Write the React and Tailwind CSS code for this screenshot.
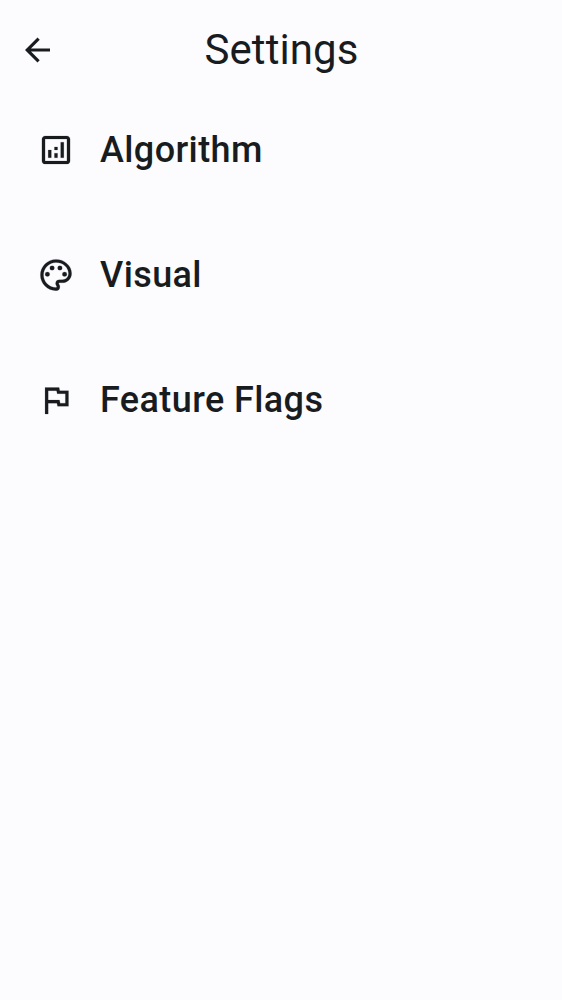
const items = [
  {
    label: "Algorithm",
    path: "M9 17H7v-5h2v5zm8 0h-2V7h2v10zm-4 0h-2v-3h2v3zm0-5h-2v-2h2v2zm6-9H5c-1.100 0-2 .9-2 2v14c0 1.100.9 2 2 2h14c1.100 0 2-.9 2-2V5c0-1.100-.9-2-2-2zm0 16H5V5h14v14z",
  },
  {
    label: "Visual",
    path: "M12 22C6.490 22 2 17.510 2 12S6.490 2 12 2s10 4.040 10 9c0 3.310-2.690 6-6 6h-1.770c-.28 0-.5.220-.5.500 0 .12.050.230.130.330.410.470.640 1.060.640 1.670A2.500 2.500 0 0 1 12 22zm0-18c-4.410 0-8 3.590-8 8s3.590 8 8 8c.28 0 .5-.22.5-.5a.54.54 0 0 0-.14-.35c-.41-.46-.63-1.050-.63-1.650a2.500 2.500 0 0 1 2.500-2.500H16c2.210 0 4-1.790 4-4 0-3.860-3.590-7-8-7zM6.500 10a1.500 1.500 0 1 0 0 3 1.500 1.500 0 0 0 0-3zm3-4a1.500 1.500 0 1 0 0 3 1.500 1.500 0 0 0 0-3zm5 0a1.500 1.500 0 1 0 0 3 1.500 1.500 0 0 0 0-3zm3 4a1.500 1.500 0 1 0 0 3 1.500 1.500 0 0 0 0-3z",
  },
  {
    label: "Feature Flags",
    path: "M12.360 6l.4 2H18v6h-3.360l-.4-2H7V6h5.360M14 4H5v17h2v-7h5.600l.4 2h7V6h-5.600L14 4z",
  },
];

export default function App() {
  return (
    <div className="min-h-screen bg-[#fcfcff] font-['Roboto',sans-serif] text-[#191c1e]">
      <header className="grid h-[100px] grid-cols-[60px_1fr_60px] items-center">
        <button aria-label="Back" className="ml-[19px] w-[37px]">
          <svg viewBox="0.16 -0.16 23.68 24.32" className="h-[38px] w-[37px]" fill="currentColor">
            <path d="M20 11H7.830l5.590-5.590L12 4l-8 8 8 8 1.410-1.410L7.830 13H20v-2z" />
          </svg>
        </button>
        <h1 className="pl-px text-center text-[42px] leading-[50px] tracking-[0.1px]">Settings</h1>
      </header>
      <nav>
        {items.map(({ label, path }) => (
          <a key={label} className="mb-[25px] flex h-[100px] items-center pl-[37px]">
            <svg
              viewBox="-0.16 -0.16 24.32 24.32"
              className="size-[38px] shrink-0"
              fill="currentColor"
              stroke="currentColor"
              strokeWidth="0.1"
            >
              <path d={path} fillRule="evenodd" />
            </svg>
            <span className="ml-[25px] text-[36px] leading-[50px] font-medium tracking-[0.4px]">{label}</span>
          </a>
        ))}
      </nav>
    </div>
  );
}
